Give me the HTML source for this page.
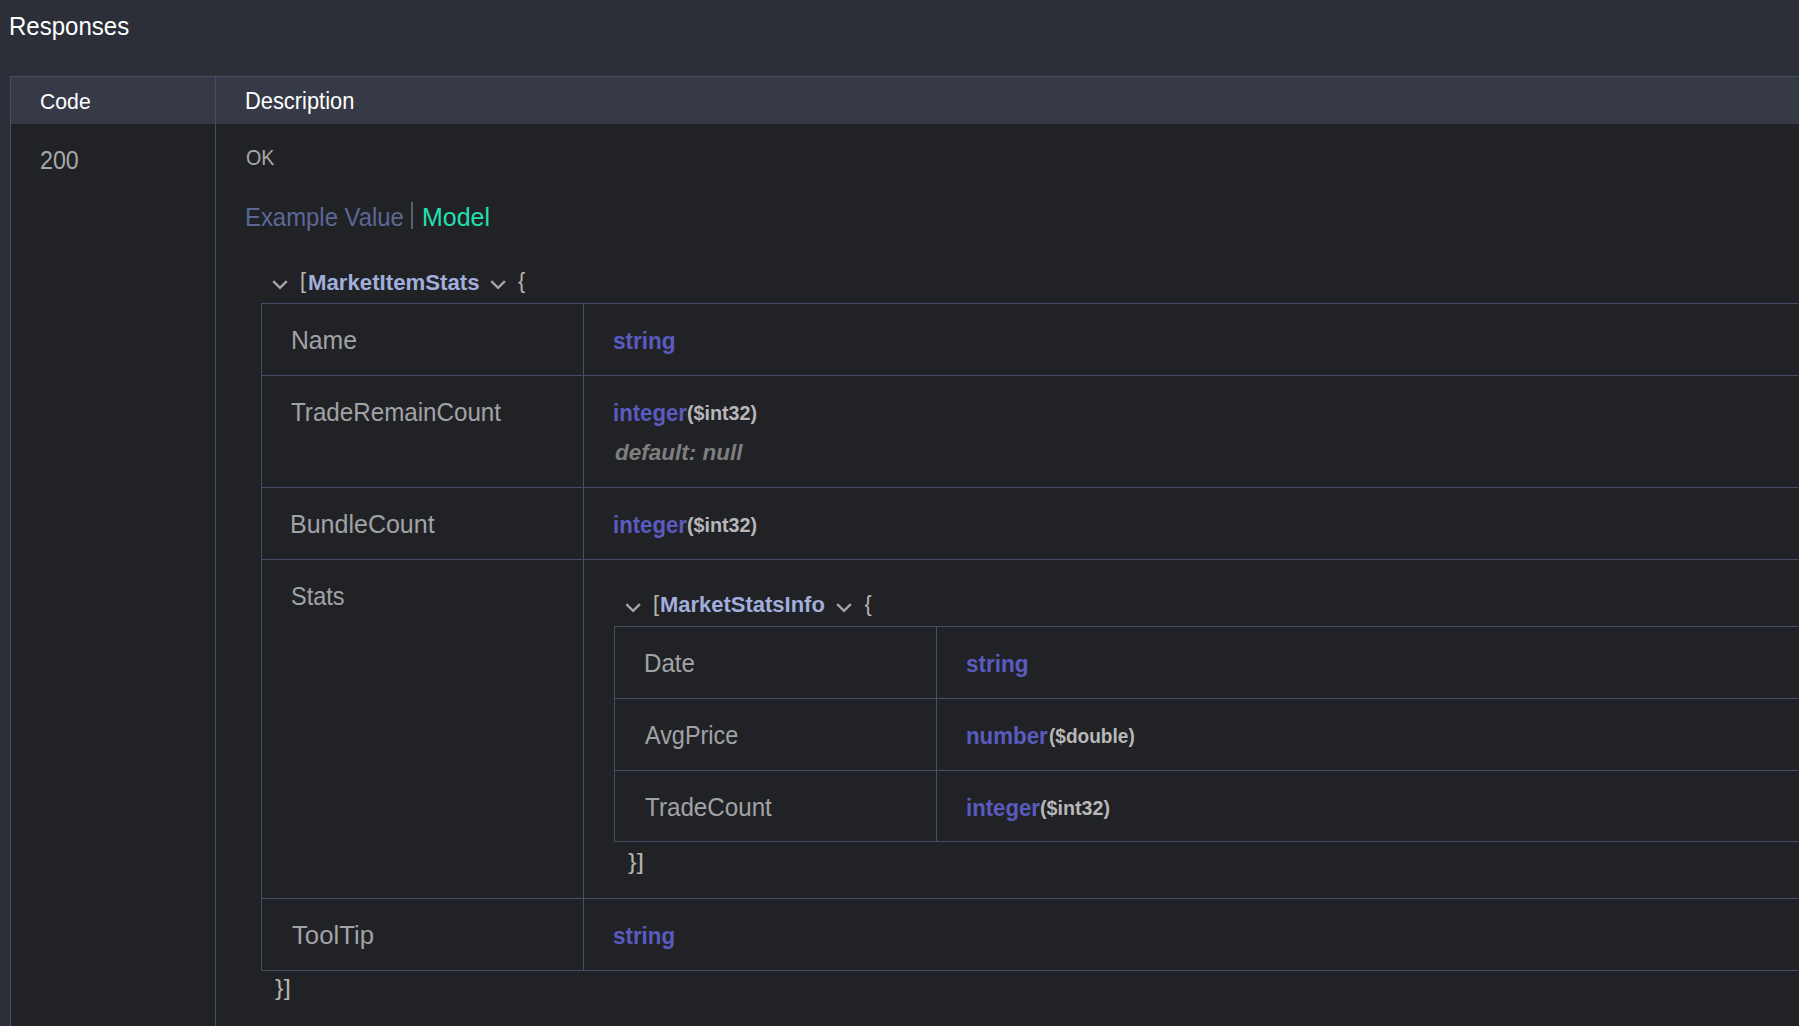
<!DOCTYPE html>
<html><head><meta charset="utf-8"><style>
html,body{margin:0;padding:0;width:1799px;height:1026px;overflow:hidden;background:#2c2f38;}
.t{position:absolute;white-space:pre;font-family:"Liberation Sans", sans-serif;transform-origin:0 0;}
.b{position:absolute;}
</style></head><body>
<div class="b" style="left:10px;top:76px;width:1789px;height:1px;background:#444e64"></div>
<div class="b" style="left:10px;top:76px;width:1px;height:950px;background:#444e64"></div>
<div class="b" style="left:11px;top:77px;width:1788px;height:47px;background:#363a46"></div>
<div class="b" style="left:11px;top:124px;width:1788px;height:902px;background:#212226"></div>
<div class="b" style="left:215px;top:77px;width:1px;height:949px;background:#444e64"></div>
<div class="b" style="left:261px;top:303px;width:1538px;height:1px;background:#444e64"></div>
<div class="b" style="left:261px;top:375px;width:1538px;height:1px;background:#444e64"></div>
<div class="b" style="left:261px;top:487px;width:1538px;height:1px;background:#444e64"></div>
<div class="b" style="left:261px;top:559px;width:1538px;height:1px;background:#444e64"></div>
<div class="b" style="left:261px;top:898px;width:1538px;height:1px;background:#444e64"></div>
<div class="b" style="left:261px;top:970px;width:1538px;height:1px;background:#444e64"></div>
<div class="b" style="left:261px;top:303px;width:1px;height:668px;background:#444e64"></div>
<div class="b" style="left:583px;top:303px;width:1px;height:668px;background:#444e64"></div>
<div class="b" style="left:614px;top:626px;width:1185px;height:1px;background:#444e64"></div>
<div class="b" style="left:614px;top:698px;width:1185px;height:1px;background:#444e64"></div>
<div class="b" style="left:614px;top:770px;width:1185px;height:1px;background:#444e64"></div>
<div class="b" style="left:614px;top:841px;width:1185px;height:1px;background:#444e64"></div>
<div class="b" style="left:614px;top:626px;width:1px;height:216px;background:#444e64"></div>
<div class="b" style="left:936px;top:626px;width:1px;height:216px;background:#444e64"></div>
<div class="b" style="left:411px;top:202px;width:2px;height:27px;background:#5a6070"></div>
<svg class="b" style="left:270px;top:278px" width="20" height="14" viewBox="0 0 20 14"><polyline points="3.20,3.05 10.00,9.75 16.80,3.05" fill="none" stroke="#a4a4a8" stroke-width="2.4"/></svg>
<svg class="b" style="left:488px;top:278px" width="20" height="14" viewBox="0 0 20 14"><polyline points="3.30,3.05 10.10,9.75 16.90,3.05" fill="none" stroke="#a4a4a8" stroke-width="2.4"/></svg>
<svg class="b" style="left:623px;top:601px" width="20" height="14" viewBox="0 0 20 14"><polyline points="3.30,3.05 10.10,9.75 16.90,3.05" fill="none" stroke="#a4a4a8" stroke-width="2.4"/></svg>
<svg class="b" style="left:834px;top:601px" width="20" height="14" viewBox="0 0 20 14"><polyline points="3.20,3.05 10.00,9.75 16.80,3.05" fill="none" stroke="#a4a4a8" stroke-width="2.4"/></svg>
<div class="t" style="left:300.00px;top:269.88px;font-size:21.81px;line-height:21.81px;color:#b8b4ac;transform:scaleX(1.0)">[</div>
<div class="t" style="left:518.00px;top:269.88px;font-size:21.81px;line-height:21.81px;color:#b8b4ac;transform:scaleX(1.0)">{</div>
<div class="t" style="left:653.00px;top:592.88px;font-size:21.81px;line-height:21.81px;color:#b8b4ac;transform:scaleX(1.0)">[</div>
<div class="t" style="left:864.50px;top:592.88px;font-size:21.81px;line-height:21.81px;color:#b8b4ac;transform:scaleX(1.0)">{</div>
<div class="t" style="left:628.20px;top:850.84px;font-size:22.13px;line-height:22.13px;color:#b8b4ac;transform:scaleX(1.18)">}]</div>
<div class="t" style="left:275.00px;top:976.54px;font-size:22.13px;line-height:22.13px;color:#b8b4ac;transform:scaleX(1.17)">}]</div>
<div class="t" style="left:9.12px;top:13px;font-size:26.5px;line-height:26.5px;font-weight:normal;font-style:normal;color:#ffffff;transform:scaleX(0.9063)">Responses</div>
<div class="t" style="left:40.20px;top:90px;font-size:22.86px;line-height:22.86px;font-weight:normal;font-style:normal;color:#ffffff;transform:scaleX(0.9280)">Code</div>
<div class="t" style="left:244.91px;top:90px;font-size:23.0px;line-height:23.0px;font-weight:normal;font-style:normal;color:#ffffff;transform:scaleX(0.9500)">Description</div>
<div class="t" style="left:40.10px;top:147px;font-size:26.2px;line-height:26.2px;font-weight:normal;font-style:normal;color:#a8a8a8;transform:scaleX(0.8872)">200</div>
<div class="t" style="left:245.59px;top:146px;font-size:22.86px;line-height:22.86px;font-weight:normal;font-style:normal;color:#a8a8a8;transform:scaleX(0.8618)">OK</div>
<div class="t" style="left:245.31px;top:204px;font-size:26.3px;line-height:26.3px;font-weight:normal;font-style:normal;color:#5c6894;transform:scaleX(0.9083)">Example Value</div>
<div class="t" style="left:421.81px;top:204px;font-size:26.5px;line-height:26.5px;font-weight:normal;font-style:normal;color:#22e0b0;transform:scaleX(0.9410)">Model</div>
<div class="t" style="left:307.76px;top:272px;font-size:22.0px;line-height:22.0px;font-weight:bold;font-style:normal;color:#a2aedc;transform:scaleX(1.0091)">MarketItemStats</div>
<div class="t" style="left:290.92px;top:328px;font-size:25.6px;line-height:25.6px;font-weight:normal;font-style:normal;color:#a2a2a6;transform:scaleX(0.9664)">Name</div>
<div class="t" style="left:612.99px;top:330px;font-size:23.01px;line-height:23.01px;font-weight:bold;font-style:normal;color:#5a5bbf;transform:scaleX(0.9805)">string</div>
<div class="t" style="left:291.19px;top:400px;font-size:25.6px;line-height:25.6px;font-weight:normal;font-style:normal;color:#a2a2a6;transform:scaleX(0.9443)">TradeRemainCount</div>
<div class="t" style="left:612.95px;top:402px;font-size:23.01px;line-height:23.01px;font-weight:bold;font-style:normal;color:#5a5bbf;transform:scaleX(0.9631)">integer</div>
<div class="t" style="left:687.01px;top:404px;font-size:19.5px;line-height:19.5px;font-weight:bold;font-style:normal;color:#b8b8b8;transform:scaleX(1.0099)">($int32)</div>
<div class="t" style="left:614.72px;top:442px;font-size:22.6px;line-height:22.6px;font-weight:bold;font-style:italic;color:#7f7f7f;transform:scaleX(0.9956)">default: null</div>
<div class="t" style="left:290.40px;top:512px;font-size:25.6px;line-height:25.6px;font-weight:normal;font-style:normal;color:#a2a2a6;transform:scaleX(0.9772)">BundleCount</div>
<div class="t" style="left:612.95px;top:514px;font-size:23.01px;line-height:23.01px;font-weight:bold;font-style:normal;color:#5a5bbf;transform:scaleX(0.9631)">integer</div>
<div class="t" style="left:687.01px;top:516px;font-size:19.5px;line-height:19.5px;font-weight:bold;font-style:normal;color:#b8b8b8;transform:scaleX(1.0099)">($int32)</div>
<div class="t" style="left:291.01px;top:584px;font-size:25.6px;line-height:25.6px;font-weight:normal;font-style:normal;color:#a2a2a6;transform:scaleX(0.9160)">Stats</div>
<div class="t" style="left:660.28px;top:594px;font-size:22.0px;line-height:22.0px;font-weight:bold;font-style:normal;color:#a2aedc;transform:scaleX(0.9989)">MarketStatsInfo</div>
<div class="t" style="left:643.87px;top:651px;font-size:25.6px;line-height:25.6px;font-weight:normal;font-style:normal;color:#a2a2a6;transform:scaleX(0.9427)">Date</div>
<div class="t" style="left:966.19px;top:653px;font-size:23.01px;line-height:23.01px;font-weight:bold;font-style:normal;color:#5a5bbf;transform:scaleX(0.9805)">string</div>
<div class="t" style="left:644.52px;top:723px;font-size:25.6px;line-height:25.6px;font-weight:normal;font-style:normal;color:#a2a2a6;transform:scaleX(0.9139)">AvgPrice</div>
<div class="t" style="left:966.02px;top:725px;font-size:23.01px;line-height:23.01px;font-weight:bold;font-style:normal;color:#5a5bbf;transform:scaleX(0.9688)">number</div>
<div class="t" style="left:1048.54px;top:727px;font-size:19.5px;line-height:19.5px;font-weight:bold;font-style:normal;color:#b8b8b8;transform:scaleX(0.9774)">($double)</div>
<div class="t" style="left:644.99px;top:795px;font-size:25.6px;line-height:25.6px;font-weight:normal;font-style:normal;color:#a2a2a6;transform:scaleX(0.9450)">TradeCount</div>
<div class="t" style="left:965.95px;top:797px;font-size:23.01px;line-height:23.01px;font-weight:bold;font-style:normal;color:#5a5bbf;transform:scaleX(0.9631)">integer</div>
<div class="t" style="left:1040.01px;top:799px;font-size:19.5px;line-height:19.5px;font-weight:bold;font-style:normal;color:#b8b8b8;transform:scaleX(1.0099)">($int32)</div>
<div class="t" style="left:291.86px;top:923px;font-size:25.6px;line-height:25.6px;font-weight:normal;font-style:normal;color:#a2a2a6;transform:scaleX(1.0053)">ToolTip</div>
<div class="t" style="left:613.00px;top:925px;font-size:23.01px;line-height:23.01px;font-weight:bold;font-style:normal;color:#5a5bbf;transform:scaleX(0.9723)">string</div>
</body></html>
